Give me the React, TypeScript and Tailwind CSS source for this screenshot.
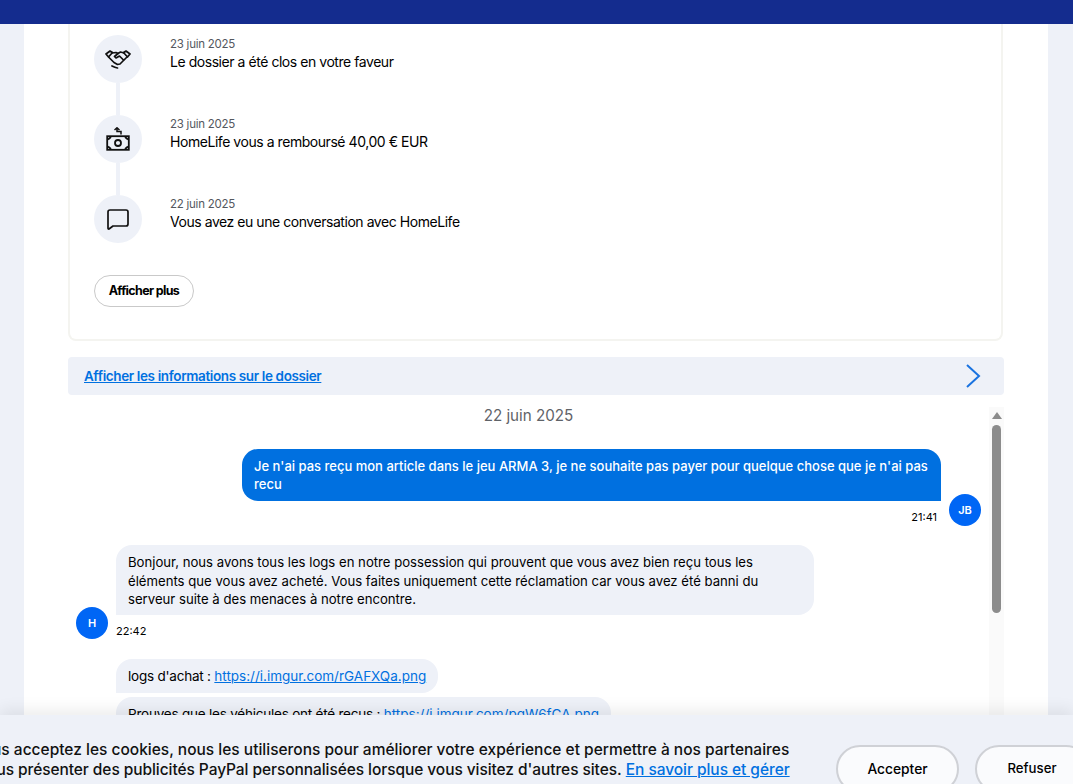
const font = { fontFamily: 'Inter, "Liberation Sans", sans-serif' };

// ===== Iconos =====
function HandshakeIcon() {
	return (
		<svg width="26" height="20" viewBox="0 0 26 20" fill="none" stroke="#111" strokeWidth="1.7" strokeLinejoin="round" strokeLinecap="round">
			<path d="M1 5 L5 2 L7.5 3.5 L3.5 8 Z" />
			<path d="M25 5 L21 2 L18.5 3.5 L22.5 8 Z" />
			<path d="M7 4 L11 3.5 L13 4.5 L15.5 3 L19 4" />
			<path d="M4 8.5 L9 13.5 L12.5 15.5 L15 15 L21.5 8.5" />
			<path d="M13 4.5 L9.5 7.5 L11 9 L14.5 7 L18.5 11" />
			<path d="M7 17 Q10 18.5 12.5 19" />
		</svg>
	);
}

function MoneyIcon() {
	return (
		<svg width="24" height="24" viewBox="0 0 24 24" fill="none" stroke="#111" strokeWidth="1.8">
			<rect x="1.2" y="9.2" width="21.6" height="13.6" />
			<circle cx="12" cy="16" r="3" />
			<path d="M2 12.5 L5 10 M22 12.5 L19 10 M2 19.5 L5 22 M22 19.5 L19 22" />
			<path d="M8.5 3 L11 0.8 L13.5 3 M11 1 V4.5 H15 V7.5" strokeWidth="1.5" />
		</svg>
	);
}

function ChatIcon() {
	return (
		<svg width="24" height="24" viewBox="0 0 24 24" fill="none" stroke="#111" strokeWidth="1.7" strokeLinejoin="round">
			<path d="M4 3 H20 Q22 3 22 5 V17 Q22 19 20 19 H7 L3 22 Q2 22.4 2 21 V5 Q2 3 4 3 Z" />
		</svg>
	);
}

// ===== Línea de tiempo =====
const eventos = [
	{ fecha: '23 juin 2025', texto: 'Le dossier a été clos en votre faveur', icono: <HandshakeIcon /> },
	{ fecha: '23 juin 2025', texto: 'HomeLife vous a remboursé 40,00 € EUR', icono: <MoneyIcon /> },
	{ fecha: '22 juin 2025', texto: 'Vous avez eu une conversation avec HomeLife', icono: <ChatIcon /> },
];

function Timeline() {
	return (
		<div>
			{eventos.map((e, i) => (
				<div key={i} className="flex h-20 gap-7">
					<div className="flex w-12 flex-col items-center">
						<div className="flex size-12 shrink-0 items-center justify-center rounded-full bg-[#eef1f8]">{e.icono}</div>
						{i < eventos.length - 1 && <div className="w-1 flex-1 bg-[#eef1f8]" />}
					</div>
					<div className="pt-px">
						<div className="text-[11.5px] leading-[16px] tracking-[-0.25px] text-[#54585e]">{e.fecha}</div>
						<div className="text-[14px] leading-[20px] tracking-[-0.45px] text-[#000]">{e.texto}</div>
					</div>
				</div>
			))}
		</div>
	);
}

function Avatar(props: { label: string }) {
	return (
		<div className="flex size-8 shrink-0 items-center justify-center rounded-full bg-[#0066f5] text-[11px] font-semibold text-white">
			{props.label}
		</div>
	);
}

// ===== Página =====
export default function App() {
	return (
		<div style={font} className="relative flex h-[784px] w-[1073px] flex-col overflow-hidden bg-[#eef1f8]">
			<div className="h-6 shrink-0 bg-[#142c8e]" />

			<main className="ml-6 w-[1024px] flex-1 overflow-hidden bg-white pl-11">
				{/* Tarjeta de actividad */}
				<section className="h-[317px] w-[935px] rounded-b-lg border-x-2 border-b-2 border-[#f4f4f0] pl-[24px] pt-[11px]">
					<Timeline />
					<button className="block h-8 w-[100px] rounded-full border border-[#c9c9c9] bg-white text-[12.5px] font-bold tracking-[-0.65px] text-black">
						Afficher plus
					</button>
				</section>

				{/* Información */}
				<div className="mt-4 flex h-[38px] w-[936px] items-center justify-between rounded bg-[#eef1f8] pl-4 pr-[23px]">
					<a className="text-[13.5px] font-semibold tracking-[-0.37px] text-[#0070e0] underline">Afficher les informations sur le dossier</a>
					<svg width="16" height="24" viewBox="0 0 16 24" fill="none" stroke="#1a73e0" strokeWidth="2">
						<path d="M2 1 L14 12 L2 23" />
					</svg>
				</div>

				{/* Conversación */}
				<div className="mt-3 flex h-[400px] w-[936px]">
					<div className="flex-1 overflow-hidden">
						<div className="-mt-[1px] text-center text-[15.2px] leading-[20px] text-[#5f6368]">22 juin 2025</div>

						<div className="mt-[23px] flex justify-end gap-2 pr-2">
							<div className="flex w-[699px] flex-col items-end">
								<div className="w-full rounded-t-2xl rounded-bl-2xl bg-[#0070e0] px-3 py-2 text-[13px] font-medium leading-[18px] text-white">
									Je n'ai pas reçu mon article dans le jeu ARMA 3, je ne souhaite pas payer pour quelque chose que je n'ai pas recu
								</div>
								<div className="mr-1 mt-[10px] text-[11px] leading-[13px] text-black">21:41</div>
							</div>
							<div className="mt-[45px]">
								<Avatar label="JB" />
							</div>
						</div>

						<div className="mt-[19px] flex gap-2 pl-2">
							<div className="mt-[62px]">
								<Avatar label="H" />
							</div>
							<div>
								<div className="w-[698px] rounded-t-2xl rounded-br-2xl bg-[#eef1f8] px-3 pb-[6.5px] pt-[8px] text-[13.15px] leading-[18.5px] text-black">
									Bonjour, nous avons tous les logs en notre possession qui prouvent que vous avez bien reçu tous les éléments que vous avez acheté. Vous faites uniquement cette réclamation car vous avez été banni du serveur suite à des menaces à notre encontre.
								</div>
								<div className="mt-[10px] text-[11px] leading-[13px] text-black">22:42</div>
								<div className="mt-[21px] w-fit rounded-t-2xl rounded-br-2xl bg-[#eef1f8] px-3 py-2 text-[13.5px] leading-[18px] tracking-[-0.22px] text-black">
									logs d'achat : <a className="tracking-normal text-[#0070e0] underline">https://i.imgur.com/rGAFXQa.png</a>
								</div>
								<div className="mt-1 w-fit rounded-t-2xl rounded-br-2xl bg-[#eef1f8] px-3 py-2 text-[13.5px] leading-[18px] tracking-[-0.22px] text-black">
									Prouves que les véhicules ont été recus : <a className="tracking-normal text-[#0070e0] underline">https://i.imgur.com/pqW6fCA.png</a>
								</div>
							</div>
						</div>
					</div>

					{/* Barra de scroll */}
					<div className="flex w-[15px] shrink-0 flex-col items-center bg-[#fafafa] pt-[5px]">
						<div className="h-0 w-0 border-x-[5px] border-b-[7px] border-x-transparent border-b-[#8c8c8c]" />
						<div className="mt-[6px] h-[188px] w-[9px] rounded-full bg-[#8c8c8c]" />
					</div>
				</div>
			</main>

			{/* Banner de cookies */}
			<div className="absolute inset-x-0 bottom-0 flex h-[69px] overflow-hidden bg-[#eef1f8] pt-[25px] shadow-[0_-6px_14px_rgba(0,0,0,0.07)]">
				<p className="-ml-[44px] w-[840px] shrink-0 whitespace-nowrap text-[15.5px] font-[450] leading-[20px] text-[#111]">
					Si vous acceptez les cookies, nous les utiliserons pour améliorer votre expérience et permettre à nos partenaires
					<br />
					<span className="tracking-[-0.07px]">de vous présenter des publicités PayPal personnalisées lorsque vous visitez d'autres sites.</span>{' '}
					<a className="tracking-[-0.05px] text-[#0070e0] underline">En savoir plus et gérer</a>
				</p>
				<div className="ml-[40px] mt-[5px] flex shrink-0 items-start gap-4">
					<button className="h-12 w-[123px] rounded-full border-2 border-[#cfd1d6] bg-[#fafbfd] text-[13.8px] font-medium text-black">Accepter</button>
					<button className="h-12 w-[115px] rounded-full border-2 border-[#cfd1d6] bg-[#fafbfd] pr-[1px] text-[13.2px] font-medium text-black">Refuser</button>
				</div>
			</div>
		</div>
	);
}
